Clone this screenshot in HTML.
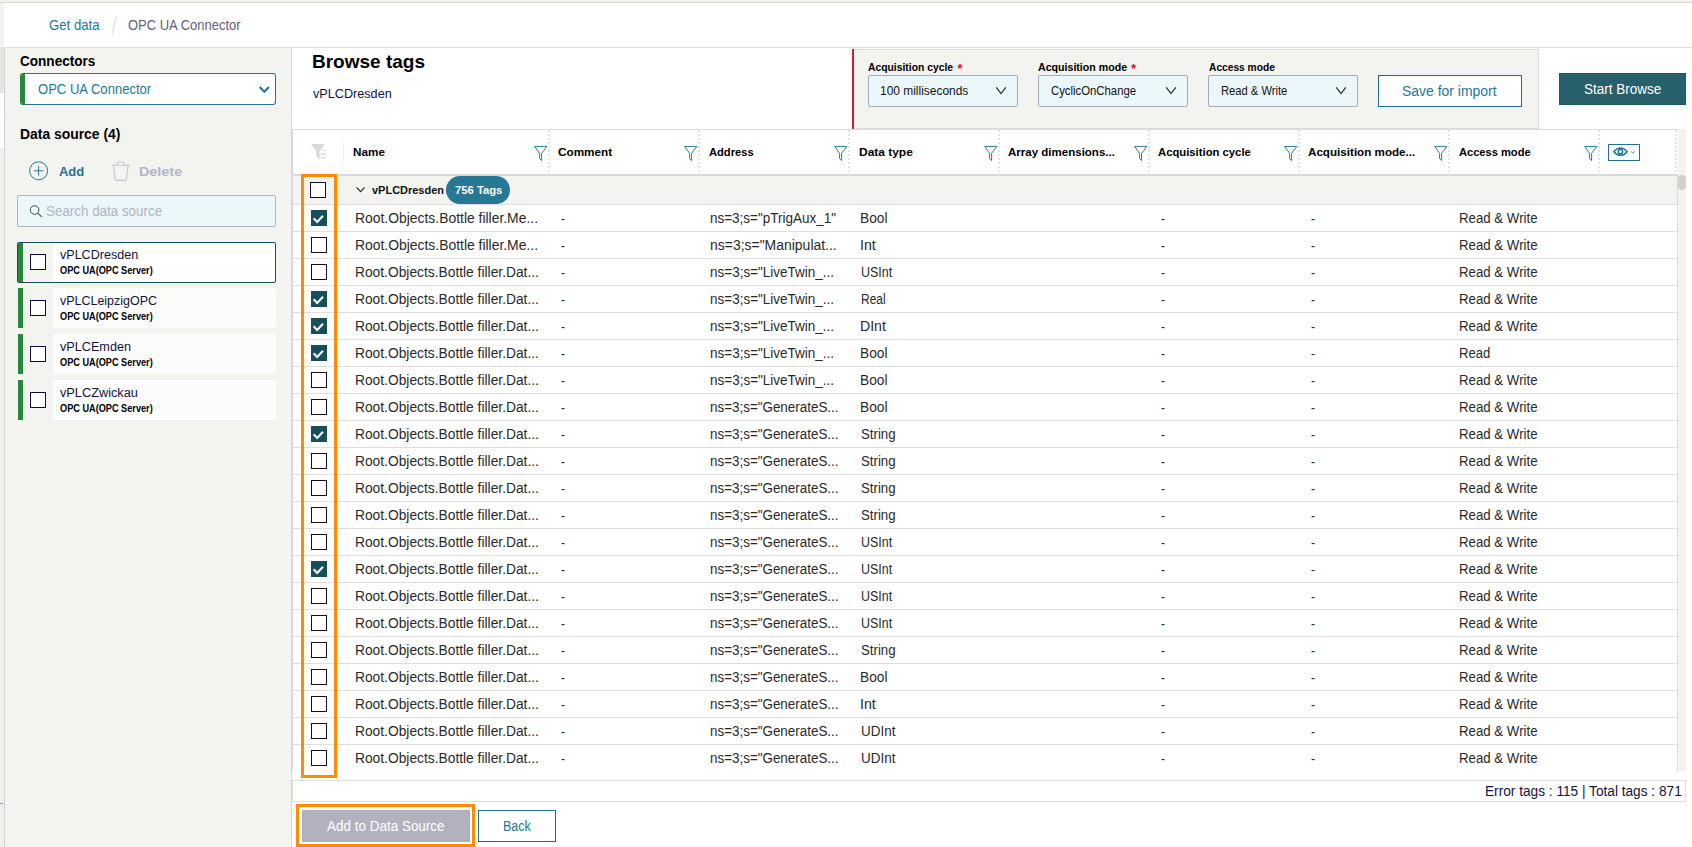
<!DOCTYPE html>
<html><head><meta charset="utf-8"><title>OPC UA Connector</title>
<style>
html,body{margin:0;padding:0;}
body{width:1692px;height:847px;overflow:hidden;background:#fff;position:relative;font-family:"Liberation Sans",sans-serif;}
.a{position:absolute;box-sizing:border-box;}
.t{position:absolute;white-space:nowrap;line-height:1;transform-origin:0 50%;font-family:"Liberation Sans",sans-serif;}
svg{position:absolute;overflow:visible;}
.cb{position:absolute;box-sizing:border-box;width:16px;height:16px;border:1.4px solid #100b3d;background:#fff;}
.cbc{position:absolute;box-sizing:border-box;width:16px;height:16px;background:#17505d;}
.rl{position:absolute;left:293px;width:1384px;height:1px;background:#dddde2;}
.dv{position:absolute;top:129px;height:45px;width:2px;background:repeating-linear-gradient(to bottom,transparent 0,transparent 1px,#e3e3e3 1px,#e3e3e3 3px,transparent 3px,transparent 4px);}
.sel{position:absolute;box-sizing:border-box;height:32px;width:150px;top:75px;background:#ebf7f8;border:1px solid #a5adc0;border-radius:2px;}
</style></head><body>

<div class="a" style="left:0;top:0;width:1692px;height:2px;background:#f3f3ef"></div>
<div class="a" style="left:0;top:2px;width:1692px;height:1px;background:#d6d6d6"></div>
<div class="a" style="left:0;top:3px;width:4px;height:44px;background:#f3f3f3"></div>
<div class="a" style="left:0;top:47px;width:4px;height:46px;background:#e6e6e4"></div>
<div class="a" style="left:0;top:93px;width:4px;height:55px;background:#fff"></div>
<div class="a" style="left:0;top:148px;width:4px;height:699px;background:linear-gradient(to right,#f2f2ee,#eeeeec 40%)"></div>
<div class="a" style="left:0;top:803px;width:3px;height:1px;background:#9a9ab0"></div>
<div class="a" style="left:4px;top:47px;width:1688px;height:1px;background:#dcdce4"></div>
<span id="bc1" class="t" style="left:48.90px;top:18.00px;font-size:14px;color:#23789a;font-weight:400;transform:scaleX(0.9409);">Get data</span>
<svg style="left:110px;top:15px" width="8" height="22"><line x1="6.3" y1="1.5" x2="2" y2="20" stroke="#e6dde8" stroke-width="1.4"/></svg>
<span id="bc2" class="t" style="left:128.20px;top:18.00px;font-size:14px;color:#5e5e7c;font-weight:400;transform:scaleX(0.9273);">OPC UA Connector</span>
<div class="a" style="left:4px;top:48px;width:288px;height:799px;background:#f3f3ef;border-left:1px solid #d2d2d2;border-right:1px solid #d6d6d6"></div>
<div class="a" style="left:5px;top:113px;width:286px;height:1px;background:#eeeeea"></div>
<span id="sb_conn" class="t" style="left:20.20px;top:54.00px;font-size:14px;color:#000;font-weight:700;transform:scaleX(0.9689);">Connectors</span>
<div class="a" style="left:20px;top:73px;width:256px;height:32px;background:#fff;border:1px solid #27728f;border-left-color:#27873a;border-radius:3px;overflow:hidden"><div class="a" style="left:-1px;top:-1px;width:5px;height:32px;background:#27873a"></div></div>
<span id="sb_sel" class="t" style="left:37.80px;top:82.00px;font-size:14px;color:#23789a;font-weight:400;transform:scaleX(0.9323);">OPC UA Connector</span>
<svg style="left:256px;top:82px" width="16" height="14"><polyline points="3.6,5 8.3,9.8 13,5" fill="none" stroke="#23789a" stroke-width="2.2"/></svg>
<span id="sb_ds" class="t" style="left:20.20px;top:127.00px;font-size:14px;color:#000;font-weight:700;transform:scaleX(0.9922);">Data source (4)</span>
<svg style="left:28px;top:160px" width="22" height="22"><circle cx="10.6" cy="10.8" r="9" fill="none" stroke="#23789a" stroke-width="1"/><path d="M5.8 10.8H15.6M10.6 6.1V15.6" stroke="#23789a" stroke-width="1" fill="none"/></svg>
<span id="sb_add" class="t" style="left:58.60px;top:165.00px;font-size:13.5px;color:#1f7494;font-weight:700;transform:scaleX(0.9615);">Add</span>
<svg style="left:110px;top:160px" width="22" height="22"><path d="M2 5.3H19.6M7.3 5.1V3.2Q7.3 2 8.6 2H13Q14.3 2 14.3 3.2V5.1M3.6 5.5L5.1 19.2Q5.3 20.4 6.5 20.4H15Q16.2 20.4 16.4 19.2L18 5.5" fill="none" stroke="#c9c3cf" stroke-width="1.1"/></svg>
<span id="sb_del" class="t" style="left:139.40px;top:165.00px;font-size:13.5px;color:#b5b5c9;font-weight:700;transform:scaleX(1.0641);">Delete</span>
<div class="a" style="left:17px;top:195px;width:259px;height:32px;background:#ebf7f8;border:1px solid #b3b3c4;border-radius:2px"></div>
<svg style="left:28px;top:204px" width="16" height="16"><circle cx="6.6" cy="6" r="4.3" fill="none" stroke="#4a4350" stroke-width="1"/><path d="M9.6 9.2L13.8 12.8" stroke="#4a4350" stroke-width="1.1"/></svg>
<span id="sb_search" class="t" style="left:46.20px;top:204.00px;font-size:14px;color:#b4b4c4;font-weight:400;transform:scaleX(0.9563);">Search data source</span>
<div class="a" style="left:17px;top:242px;width:259px;height:41px;background:#fff;border:1px solid #174e5e;border-radius:2px"></div>
<div class="a" style="left:18px;top:243px;width:5px;height:39px;background:#27873a"></div>
<div class="a" style="left:23px;top:243px;width:30px;height:39px;background:#f3f3ef"></div>
<div class="cb" style="left:30px;top:254px"></div>
<span id="it0a" class="t" style="left:60.00px;top:249.00px;font-size:12.5px;color:#12123c;font-weight:400;transform:scaleX(1.0038);">vPLCDresden</span>
<span id="it0b" class="t" style="left:60.00px;top:266.00px;font-size:10px;color:#000;font-weight:700;transform:scaleX(0.9167);">OPC UA(OPC Server)</span>
<div class="a" style="left:18px;top:288px;width:258px;height:40px;background:#fcfcfc;border-radius:2px"></div>
<div class="a" style="left:18px;top:288px;width:5px;height:40px;background:#27873a"></div>
<div class="a" style="left:23px;top:288px;width:30px;height:40px;background:#f3f3ef"></div>
<div class="cb" style="left:30px;top:300px"></div>
<span id="it1a" class="t" style="left:60.00px;top:295.00px;font-size:12.5px;color:#12123c;font-weight:400;transform:scaleX(0.9969);">vPLCLeipzigOPC</span>
<span id="it1b" class="t" style="left:60.00px;top:312.00px;font-size:10px;color:#000;font-weight:700;transform:scaleX(0.9167);">OPC UA(OPC Server)</span>
<div class="a" style="left:18px;top:334px;width:258px;height:40px;background:#fcfcfc;border-radius:2px"></div>
<div class="a" style="left:18px;top:334px;width:5px;height:40px;background:#27873a"></div>
<div class="a" style="left:23px;top:334px;width:30px;height:40px;background:#f3f3ef"></div>
<div class="cb" style="left:30px;top:346px"></div>
<span id="it2a" class="t" style="left:60.00px;top:341.00px;font-size:12.5px;color:#12123c;font-weight:400;transform:scaleX(1.0114);">vPLCEmden</span>
<span id="it2b" class="t" style="left:60.00px;top:358.00px;font-size:10px;color:#000;font-weight:700;transform:scaleX(0.9167);">OPC UA(OPC Server)</span>
<div class="a" style="left:18px;top:380px;width:258px;height:40px;background:#fcfcfc;border-radius:2px"></div>
<div class="a" style="left:18px;top:380px;width:5px;height:40px;background:#27873a"></div>
<div class="a" style="left:23px;top:380px;width:30px;height:40px;background:#f3f3ef"></div>
<div class="cb" style="left:30px;top:392px"></div>
<span id="it3a" class="t" style="left:60.00px;top:387.00px;font-size:12.5px;color:#12123c;font-weight:400;transform:scaleX(1.0195);">vPLCZwickau</span>
<span id="it3b" class="t" style="left:60.00px;top:404.00px;font-size:10px;color:#000;font-weight:700;transform:scaleX(0.9167);">OPC UA(OPC Server)</span>
<span id="h_title" class="t" style="left:311.50px;top:53.00px;font-size:18.5px;color:#000;font-weight:700;transform:scaleX(1.0275);">Browse tags</span>
<span id="h_sub" class="t" style="left:312.50px;top:88.00px;font-size:12px;color:#12123c;font-weight:400;transform:scaleX(1.0535);">vPLCDresden</span>
<div class="a" style="left:852px;top:49px;width:687px;height:80px;background:#f3f3ef;border:1px solid #dcdcdc;border-left:none"></div>
<div class="a" style="left:852px;top:49px;width:2px;height:80px;background:#d8193a"></div>
<span id="l_ac" class="t" style="left:867.90px;top:62.00px;font-size:11.5px;color:#000;font-weight:700;transform:scaleX(0.8989);">Acquisition cycle</span>
<span id="l_ac_s" class="t" style="left:957.60px;top:62.00px;font-size:13px;color:#e0102e;font-weight:700;transform:scaleX(1.0000);">*</span>
<span id="l_am" class="t" style="left:1037.90px;top:62.00px;font-size:11.5px;color:#000;font-weight:700;transform:scaleX(0.9228);">Acquisition mode</span>
<span id="l_am_s" class="t" style="left:1131.00px;top:62.00px;font-size:13px;color:#e0102e;font-weight:700;transform:scaleX(1.0000);">*</span>
<span id="l_xm" class="t" style="left:1208.60px;top:62.00px;font-size:11.5px;color:#000;font-weight:700;transform:scaleX(0.8881);">Access mode</span>
<div class="sel" style="left:868px"></div>
<svg style="left:994px;top:84px" width="16" height="14"><polyline points="2.3,3.3 7,9.5 11.8,3.3" fill="none" stroke="#222" stroke-width="1.1"/></svg>
<div class="sel" style="left:1038px"></div>
<svg style="left:1164px;top:84px" width="16" height="14"><polyline points="2.3,3.3 7,9.5 11.8,3.3" fill="none" stroke="#222" stroke-width="1.1"/></svg>
<div class="sel" style="left:1208px"></div>
<svg style="left:1334px;top:84px" width="16" height="14"><polyline points="2.3,3.3 7,9.5 11.8,3.3" fill="none" stroke="#222" stroke-width="1.1"/></svg>
<span id="s_ac" class="t" style="left:880.20px;top:85.00px;font-size:12px;color:#111;font-weight:400;transform:scaleX(0.9955);">100 milliseconds</span>
<span id="s_am" class="t" style="left:1050.60px;top:85.00px;font-size:12px;color:#111;font-weight:400;transform:scaleX(0.9445);">CyclicOnChange</span>
<span id="s_xm" class="t" style="left:1220.60px;top:85.00px;font-size:12px;color:#111;font-weight:400;transform:scaleX(0.9318);">Read &amp; Write</span>
<div class="a" style="left:1378px;top:75px;width:144px;height:32px;background:#fff;border:1px solid #1f6d88"></div>
<span id="b_save" class="t" style="left:1401.90px;top:84.00px;font-size:14px;color:#23789a;font-weight:400;transform:scaleX(0.9959);">Save for import</span>
<div class="a" style="left:1559px;top:73px;width:127px;height:32px;background:#27606a;border:1px solid #1f5963"></div>
<span id="b_start" class="t" style="left:1584.00px;top:82.00px;font-size:14px;color:#fff;font-weight:400;transform:scaleX(0.9625);">Start Browse</span>
<div class="a" style="left:292px;top:129px;width:1386px;height:642px;border-left:1px solid #d8d8e0;border-top:1px solid #dcdce2"></div>
<div class="a" style="left:1677px;top:174px;width:1px;height:597px;background:#d8d8e0"></div>
<div class="a" style="left:293px;top:174px;width:1384px;height:2px;background:#d9d9dd"></div>
<div class="a" style="left:293px;top:176px;width:1384px;height:28px;background:#f3f3ef"></div>
<svg style="left:310px;top:142px" width="18" height="19"><path d="M1.2 1.9H14.8L9.6 9.6V17.8L6.3 14.6V9.6Z" fill="#d9d9df"/><path d="M12.6 8.3H15.8M10.7 12H15.8M10.7 15.7H15.8" stroke="#d9d9df" stroke-width="1.3"/></svg>
<div class="a" style="left:343px;top:142px;width:1px;height:19px;background:#eeeeee"></div>
<span id="th0" class="t" style="left:353.00px;top:147.00px;font-size:11.5px;color:#000;font-weight:700;transform:scaleX(1.0189);">Name</span>
<svg style="left:533.8px;top:145px" width="15" height="17"><path d="M0.6 1.4H12.9L7.6 8.3V15.6L5.6 13.7V8.3Z" fill="none" stroke="#2a7c9c" stroke-width="1"/></svg>
<div class="dv" style="left:548px"></div>
<span id="th1" class="t" style="left:558.20px;top:147.00px;font-size:11.5px;color:#000;font-weight:700;transform:scaleX(1.0223);">Comment</span>
<svg style="left:683.8px;top:145px" width="15" height="17"><path d="M0.6 1.4H12.9L7.6 8.3V15.6L5.6 13.7V8.3Z" fill="none" stroke="#2a7c9c" stroke-width="1"/></svg>
<div class="dv" style="left:698px"></div>
<span id="th2" class="t" style="left:708.60px;top:147.00px;font-size:11.5px;color:#000;font-weight:700;transform:scaleX(0.9696);">Address</span>
<svg style="left:833.8px;top:145px" width="15" height="17"><path d="M0.6 1.4H12.9L7.6 8.3V15.6L5.6 13.7V8.3Z" fill="none" stroke="#2a7c9c" stroke-width="1"/></svg>
<div class="dv" style="left:848px"></div>
<span id="th3" class="t" style="left:858.50px;top:147.00px;font-size:11.5px;color:#000;font-weight:700;transform:scaleX(1.0393);">Data type</span>
<svg style="left:983.8px;top:145px" width="15" height="17"><path d="M0.6 1.4H12.9L7.6 8.3V15.6L5.6 13.7V8.3Z" fill="none" stroke="#2a7c9c" stroke-width="1"/></svg>
<div class="dv" style="left:998px"></div>
<span id="th4" class="t" style="left:1008.20px;top:147.00px;font-size:11.5px;color:#000;font-weight:700;transform:scaleX(1.0018);">Array dimensions...</span>
<svg style="left:1133.8px;top:145px" width="15" height="17"><path d="M0.6 1.4H12.9L7.6 8.3V15.6L5.6 13.7V8.3Z" fill="none" stroke="#2a7c9c" stroke-width="1"/></svg>
<div class="dv" style="left:1148px"></div>
<span id="th5" class="t" style="left:1158.20px;top:147.00px;font-size:11.5px;color:#000;font-weight:700;transform:scaleX(0.9811);">Acquisition cycle</span>
<svg style="left:1283.8px;top:145px" width="15" height="17"><path d="M0.6 1.4H12.9L7.6 8.3V15.6L5.6 13.7V8.3Z" fill="none" stroke="#2a7c9c" stroke-width="1"/></svg>
<div class="dv" style="left:1298px"></div>
<span id="th6" class="t" style="left:1308.20px;top:147.00px;font-size:11.5px;color:#000;font-weight:700;transform:scaleX(1.0113);">Acquisition mode...</span>
<svg style="left:1433.8px;top:145px" width="15" height="17"><path d="M0.6 1.4H12.9L7.6 8.3V15.6L5.6 13.7V8.3Z" fill="none" stroke="#2a7c9c" stroke-width="1"/></svg>
<div class="dv" style="left:1448px"></div>
<span id="th7" class="t" style="left:1458.60px;top:147.00px;font-size:11.5px;color:#000;font-weight:700;transform:scaleX(0.9656);">Access mode</span>
<svg style="left:1583.8px;top:145px" width="15" height="17"><path d="M0.6 1.4H12.9L7.6 8.3V15.6L5.6 13.7V8.3Z" fill="none" stroke="#2a7c9c" stroke-width="1"/></svg>
<div class="dv" style="left:1598px"></div>
<div class="dv" style="left:1675px"></div>
<div class="a" style="left:1608px;top:144px;width:32px;height:17px;border:1px solid #1f7494;background:#fff"></div>
<svg style="left:1612px;top:146px" width="26" height="12"><path d="M1.8 5.65Q8.5 -1.6 15.2 5.65Q8.5 12.9 1.8 5.65Z" fill="none" stroke="#1f7494" stroke-width="1.5"/><circle cx="8.4" cy="5.65" r="2.2" fill="none" stroke="#1f7494" stroke-width="1.5"/><polyline points="18.9,5.3 20.9,7.2 22.9,5.3" fill="none" stroke="#3d88aa" stroke-width="0.9"/></svg>
<div class="a" style="left:1678px;top:129px;width:8px;height:642px;background:#f3f3ef"></div>
<div class="a" style="left:1678px;top:175px;width:8px;height:15px;background:#d3d3cd;border-radius:4px"></div>
<div class="cb" style="left:310px;top:182px"></div>
<svg style="left:355px;top:185px" width="12" height="10"><polyline points="1.6,2.3 5.6,6.6 9.6,2.3" fill="none" stroke="#222" stroke-width="1.1"/></svg>
<span id="g_name" class="t" style="left:372.10px;top:185.00px;font-size:11.5px;color:#111;font-weight:700;transform:scaleX(0.9543);">vPLCDresden</span>
<div class="a" style="left:446px;top:176px;width:64px;height:28px;background:#267895;border-radius:14px"></div>
<span id="g_badge" class="t" style="left:454.90px;top:185.00px;font-size:11px;color:#fff;font-weight:700;transform:scaleX(1.0241);">756 Tags</span>
<div class="rl" style="top:204px"></div>
<div class="rl" style="top:231px"></div>
<div class="cbc" style="left:311px;top:210px"><svg style="left:0;top:0" width="16" height="16"><polyline points="2.6,8.3 6.2,12 12,5.8" fill="none" stroke="#fff" stroke-width="2"/></svg></div>
<span id="r0n" class="t" style="left:354.60px;top:211.00px;font-size:14px;color:#292929;font-weight:400;transform:scaleX(0.9924);">Root.Objects.Bottle filler.Me...</span>
<span id="r0c" class="t" style="left:561.00px;top:212.00px;font-size:14px;color:#292929;font-weight:400;transform:scaleX(0.8500);">-</span>
<span id="r0a" class="t" style="left:710.40px;top:211.00px;font-size:14px;color:#292929;font-weight:400;transform:scaleX(0.9634);">ns=3;s="pTrigAux_1"</span>
<span id="r0d" class="t" style="left:860.00px;top:211.00px;font-size:14px;color:#292929;font-weight:400;transform:scaleX(0.9786);">Bool</span>
<span id="r0q" class="t" style="left:1161.00px;top:212.00px;font-size:14px;color:#292929;font-weight:400;transform:scaleX(0.8500);">-</span>
<span id="r0m" class="t" style="left:1311.00px;top:212.00px;font-size:14px;color:#292929;font-weight:400;transform:scaleX(0.8500);">-</span>
<span id="r0x" class="t" style="left:1459.30px;top:211.00px;font-size:14px;color:#292929;font-weight:400;transform:scaleX(0.9464);">Read &amp; Write</span>
<div class="rl" style="top:258px"></div>
<div class="cb" style="left:311px;top:237px"></div>
<span id="r1n" class="t" style="left:354.60px;top:238.00px;font-size:14px;color:#292929;font-weight:400;transform:scaleX(0.9924);">Root.Objects.Bottle filler.Me...</span>
<span id="r1c" class="t" style="left:561.00px;top:239.00px;font-size:14px;color:#292929;font-weight:400;transform:scaleX(0.8500);">-</span>
<span id="r1a" class="t" style="left:710.40px;top:238.00px;font-size:14px;color:#292929;font-weight:400;transform:scaleX(0.9968);">ns=3;s="Manipulat...</span>
<span id="r1d" class="t" style="left:860.00px;top:238.00px;font-size:14px;color:#292929;font-weight:400;transform:scaleX(1.0140);">Int</span>
<span id="r1q" class="t" style="left:1161.00px;top:239.00px;font-size:14px;color:#292929;font-weight:400;transform:scaleX(0.8500);">-</span>
<span id="r1m" class="t" style="left:1311.00px;top:239.00px;font-size:14px;color:#292929;font-weight:400;transform:scaleX(0.8500);">-</span>
<span id="r1x" class="t" style="left:1459.30px;top:238.00px;font-size:14px;color:#292929;font-weight:400;transform:scaleX(0.9464);">Read &amp; Write</span>
<div class="rl" style="top:285px"></div>
<div class="cb" style="left:311px;top:264px"></div>
<span id="r2n" class="t" style="left:354.60px;top:265.00px;font-size:14px;color:#292929;font-weight:400;transform:scaleX(0.9848);">Root.Objects.Bottle filler.Dat...</span>
<span id="r2c" class="t" style="left:561.00px;top:266.00px;font-size:14px;color:#292929;font-weight:400;transform:scaleX(0.8500);">-</span>
<span id="r2a" class="t" style="left:710.40px;top:265.00px;font-size:14px;color:#292929;font-weight:400;transform:scaleX(0.9641);">ns=3;s="LiveTwin_...</span>
<span id="r2d" class="t" style="left:861.00px;top:265.00px;font-size:14px;color:#292929;font-weight:400;transform:scaleX(0.8913);">USInt</span>
<span id="r2q" class="t" style="left:1161.00px;top:266.00px;font-size:14px;color:#292929;font-weight:400;transform:scaleX(0.8500);">-</span>
<span id="r2m" class="t" style="left:1311.00px;top:266.00px;font-size:14px;color:#292929;font-weight:400;transform:scaleX(0.8500);">-</span>
<span id="r2x" class="t" style="left:1459.30px;top:265.00px;font-size:14px;color:#292929;font-weight:400;transform:scaleX(0.9464);">Read &amp; Write</span>
<div class="rl" style="top:312px"></div>
<div class="cbc" style="left:311px;top:291px"><svg style="left:0;top:0" width="16" height="16"><polyline points="2.6,8.3 6.2,12 12,5.8" fill="none" stroke="#fff" stroke-width="2"/></svg></div>
<span id="r3n" class="t" style="left:354.60px;top:292.00px;font-size:14px;color:#292929;font-weight:400;transform:scaleX(0.9848);">Root.Objects.Bottle filler.Dat...</span>
<span id="r3c" class="t" style="left:561.00px;top:293.00px;font-size:14px;color:#292929;font-weight:400;transform:scaleX(0.8500);">-</span>
<span id="r3a" class="t" style="left:710.40px;top:292.00px;font-size:14px;color:#292929;font-weight:400;transform:scaleX(0.9641);">ns=3;s="LiveTwin_...</span>
<span id="r3d" class="t" style="left:861.00px;top:292.00px;font-size:14px;color:#292929;font-weight:400;transform:scaleX(0.8550);">Real</span>
<span id="r3q" class="t" style="left:1161.00px;top:293.00px;font-size:14px;color:#292929;font-weight:400;transform:scaleX(0.8500);">-</span>
<span id="r3m" class="t" style="left:1311.00px;top:293.00px;font-size:14px;color:#292929;font-weight:400;transform:scaleX(0.8500);">-</span>
<span id="r3x" class="t" style="left:1459.30px;top:292.00px;font-size:14px;color:#292929;font-weight:400;transform:scaleX(0.9464);">Read &amp; Write</span>
<div class="rl" style="top:339px"></div>
<div class="cbc" style="left:311px;top:318px"><svg style="left:0;top:0" width="16" height="16"><polyline points="2.6,8.3 6.2,12 12,5.8" fill="none" stroke="#fff" stroke-width="2"/></svg></div>
<span id="r4n" class="t" style="left:354.60px;top:319.00px;font-size:14px;color:#292929;font-weight:400;transform:scaleX(0.9848);">Root.Objects.Bottle filler.Dat...</span>
<span id="r4c" class="t" style="left:561.00px;top:320.00px;font-size:14px;color:#292929;font-weight:400;transform:scaleX(0.8500);">-</span>
<span id="r4a" class="t" style="left:710.40px;top:319.00px;font-size:14px;color:#292929;font-weight:400;transform:scaleX(0.9641);">ns=3;s="LiveTwin_...</span>
<span id="r4d" class="t" style="left:860.00px;top:319.00px;font-size:14px;color:#292929;font-weight:400;transform:scaleX(1.0080);">DInt</span>
<span id="r4q" class="t" style="left:1161.00px;top:320.00px;font-size:14px;color:#292929;font-weight:400;transform:scaleX(0.8500);">-</span>
<span id="r4m" class="t" style="left:1311.00px;top:320.00px;font-size:14px;color:#292929;font-weight:400;transform:scaleX(0.8500);">-</span>
<span id="r4x" class="t" style="left:1459.30px;top:319.00px;font-size:14px;color:#292929;font-weight:400;transform:scaleX(0.9464);">Read &amp; Write</span>
<div class="rl" style="top:366px"></div>
<div class="cbc" style="left:311px;top:345px"><svg style="left:0;top:0" width="16" height="16"><polyline points="2.6,8.3 6.2,12 12,5.8" fill="none" stroke="#fff" stroke-width="2"/></svg></div>
<span id="r5n" class="t" style="left:354.60px;top:346.00px;font-size:14px;color:#292929;font-weight:400;transform:scaleX(0.9848);">Root.Objects.Bottle filler.Dat...</span>
<span id="r5c" class="t" style="left:561.00px;top:347.00px;font-size:14px;color:#292929;font-weight:400;transform:scaleX(0.8500);">-</span>
<span id="r5a" class="t" style="left:710.40px;top:346.00px;font-size:14px;color:#292929;font-weight:400;transform:scaleX(0.9641);">ns=3;s="LiveTwin_...</span>
<span id="r5d" class="t" style="left:860.00px;top:346.00px;font-size:14px;color:#292929;font-weight:400;transform:scaleX(0.9786);">Bool</span>
<span id="r5q" class="t" style="left:1161.00px;top:347.00px;font-size:14px;color:#292929;font-weight:400;transform:scaleX(0.8500);">-</span>
<span id="r5m" class="t" style="left:1311.00px;top:347.00px;font-size:14px;color:#292929;font-weight:400;transform:scaleX(0.8500);">-</span>
<span id="r5x" class="t" style="left:1459.30px;top:346.00px;font-size:14px;color:#292929;font-weight:400;transform:scaleX(0.9315);">Read</span>
<div class="rl" style="top:393px"></div>
<div class="cb" style="left:311px;top:372px"></div>
<span id="r6n" class="t" style="left:354.60px;top:373.00px;font-size:14px;color:#292929;font-weight:400;transform:scaleX(0.9848);">Root.Objects.Bottle filler.Dat...</span>
<span id="r6c" class="t" style="left:561.00px;top:374.00px;font-size:14px;color:#292929;font-weight:400;transform:scaleX(0.8500);">-</span>
<span id="r6a" class="t" style="left:710.40px;top:373.00px;font-size:14px;color:#292929;font-weight:400;transform:scaleX(0.9641);">ns=3;s="LiveTwin_...</span>
<span id="r6d" class="t" style="left:860.00px;top:373.00px;font-size:14px;color:#292929;font-weight:400;transform:scaleX(0.9786);">Bool</span>
<span id="r6q" class="t" style="left:1161.00px;top:374.00px;font-size:14px;color:#292929;font-weight:400;transform:scaleX(0.8500);">-</span>
<span id="r6m" class="t" style="left:1311.00px;top:374.00px;font-size:14px;color:#292929;font-weight:400;transform:scaleX(0.8500);">-</span>
<span id="r6x" class="t" style="left:1459.30px;top:373.00px;font-size:14px;color:#292929;font-weight:400;transform:scaleX(0.9464);">Read &amp; Write</span>
<div class="rl" style="top:420px"></div>
<div class="cb" style="left:311px;top:399px"></div>
<span id="r7n" class="t" style="left:354.60px;top:400.00px;font-size:14px;color:#292929;font-weight:400;transform:scaleX(0.9848);">Root.Objects.Bottle filler.Dat...</span>
<span id="r7c" class="t" style="left:561.00px;top:401.00px;font-size:14px;color:#292929;font-weight:400;transform:scaleX(0.8500);">-</span>
<span id="r7a" class="t" style="left:710.40px;top:400.00px;font-size:14px;color:#292929;font-weight:400;transform:scaleX(0.9579);">ns=3;s="GenerateS...</span>
<span id="r7d" class="t" style="left:860.00px;top:400.00px;font-size:14px;color:#292929;font-weight:400;transform:scaleX(0.9786);">Bool</span>
<span id="r7q" class="t" style="left:1161.00px;top:401.00px;font-size:14px;color:#292929;font-weight:400;transform:scaleX(0.8500);">-</span>
<span id="r7m" class="t" style="left:1311.00px;top:401.00px;font-size:14px;color:#292929;font-weight:400;transform:scaleX(0.8500);">-</span>
<span id="r7x" class="t" style="left:1459.30px;top:400.00px;font-size:14px;color:#292929;font-weight:400;transform:scaleX(0.9464);">Read &amp; Write</span>
<div class="rl" style="top:447px"></div>
<div class="cbc" style="left:311px;top:426px"><svg style="left:0;top:0" width="16" height="16"><polyline points="2.6,8.3 6.2,12 12,5.8" fill="none" stroke="#fff" stroke-width="2"/></svg></div>
<span id="r8n" class="t" style="left:354.60px;top:427.00px;font-size:14px;color:#292929;font-weight:400;transform:scaleX(0.9848);">Root.Objects.Bottle filler.Dat...</span>
<span id="r8c" class="t" style="left:561.00px;top:428.00px;font-size:14px;color:#292929;font-weight:400;transform:scaleX(0.8500);">-</span>
<span id="r8a" class="t" style="left:710.40px;top:427.00px;font-size:14px;color:#292929;font-weight:400;transform:scaleX(0.9579);">ns=3;s="GenerateS...</span>
<span id="r8d" class="t" style="left:861.00px;top:427.00px;font-size:14px;color:#292929;font-weight:400;transform:scaleX(0.9446);">String</span>
<span id="r8q" class="t" style="left:1161.00px;top:428.00px;font-size:14px;color:#292929;font-weight:400;transform:scaleX(0.8500);">-</span>
<span id="r8m" class="t" style="left:1311.00px;top:428.00px;font-size:14px;color:#292929;font-weight:400;transform:scaleX(0.8500);">-</span>
<span id="r8x" class="t" style="left:1459.30px;top:427.00px;font-size:14px;color:#292929;font-weight:400;transform:scaleX(0.9464);">Read &amp; Write</span>
<div class="rl" style="top:474px"></div>
<div class="cb" style="left:311px;top:453px"></div>
<span id="r9n" class="t" style="left:354.60px;top:454.00px;font-size:14px;color:#292929;font-weight:400;transform:scaleX(0.9848);">Root.Objects.Bottle filler.Dat...</span>
<span id="r9c" class="t" style="left:561.00px;top:455.00px;font-size:14px;color:#292929;font-weight:400;transform:scaleX(0.8500);">-</span>
<span id="r9a" class="t" style="left:710.40px;top:454.00px;font-size:14px;color:#292929;font-weight:400;transform:scaleX(0.9579);">ns=3;s="GenerateS...</span>
<span id="r9d" class="t" style="left:861.00px;top:454.00px;font-size:14px;color:#292929;font-weight:400;transform:scaleX(0.9446);">String</span>
<span id="r9q" class="t" style="left:1161.00px;top:455.00px;font-size:14px;color:#292929;font-weight:400;transform:scaleX(0.8500);">-</span>
<span id="r9m" class="t" style="left:1311.00px;top:455.00px;font-size:14px;color:#292929;font-weight:400;transform:scaleX(0.8500);">-</span>
<span id="r9x" class="t" style="left:1459.30px;top:454.00px;font-size:14px;color:#292929;font-weight:400;transform:scaleX(0.9464);">Read &amp; Write</span>
<div class="rl" style="top:501px"></div>
<div class="cb" style="left:311px;top:480px"></div>
<span id="r10n" class="t" style="left:354.60px;top:481.00px;font-size:14px;color:#292929;font-weight:400;transform:scaleX(0.9848);">Root.Objects.Bottle filler.Dat...</span>
<span id="r10c" class="t" style="left:561.00px;top:482.00px;font-size:14px;color:#292929;font-weight:400;transform:scaleX(0.8500);">-</span>
<span id="r10a" class="t" style="left:710.40px;top:481.00px;font-size:14px;color:#292929;font-weight:400;transform:scaleX(0.9579);">ns=3;s="GenerateS...</span>
<span id="r10d" class="t" style="left:861.00px;top:481.00px;font-size:14px;color:#292929;font-weight:400;transform:scaleX(0.9446);">String</span>
<span id="r10q" class="t" style="left:1161.00px;top:482.00px;font-size:14px;color:#292929;font-weight:400;transform:scaleX(0.8500);">-</span>
<span id="r10m" class="t" style="left:1311.00px;top:482.00px;font-size:14px;color:#292929;font-weight:400;transform:scaleX(0.8500);">-</span>
<span id="r10x" class="t" style="left:1459.30px;top:481.00px;font-size:14px;color:#292929;font-weight:400;transform:scaleX(0.9464);">Read &amp; Write</span>
<div class="rl" style="top:528px"></div>
<div class="cb" style="left:311px;top:507px"></div>
<span id="r11n" class="t" style="left:354.60px;top:508.00px;font-size:14px;color:#292929;font-weight:400;transform:scaleX(0.9848);">Root.Objects.Bottle filler.Dat...</span>
<span id="r11c" class="t" style="left:561.00px;top:509.00px;font-size:14px;color:#292929;font-weight:400;transform:scaleX(0.8500);">-</span>
<span id="r11a" class="t" style="left:710.40px;top:508.00px;font-size:14px;color:#292929;font-weight:400;transform:scaleX(0.9579);">ns=3;s="GenerateS...</span>
<span id="r11d" class="t" style="left:861.00px;top:508.00px;font-size:14px;color:#292929;font-weight:400;transform:scaleX(0.9446);">String</span>
<span id="r11q" class="t" style="left:1161.00px;top:509.00px;font-size:14px;color:#292929;font-weight:400;transform:scaleX(0.8500);">-</span>
<span id="r11m" class="t" style="left:1311.00px;top:509.00px;font-size:14px;color:#292929;font-weight:400;transform:scaleX(0.8500);">-</span>
<span id="r11x" class="t" style="left:1459.30px;top:508.00px;font-size:14px;color:#292929;font-weight:400;transform:scaleX(0.9464);">Read &amp; Write</span>
<div class="rl" style="top:555px"></div>
<div class="cb" style="left:311px;top:534px"></div>
<span id="r12n" class="t" style="left:354.60px;top:535.00px;font-size:14px;color:#292929;font-weight:400;transform:scaleX(0.9848);">Root.Objects.Bottle filler.Dat...</span>
<span id="r12c" class="t" style="left:561.00px;top:536.00px;font-size:14px;color:#292929;font-weight:400;transform:scaleX(0.8500);">-</span>
<span id="r12a" class="t" style="left:710.40px;top:535.00px;font-size:14px;color:#292929;font-weight:400;transform:scaleX(0.9579);">ns=3;s="GenerateS...</span>
<span id="r12d" class="t" style="left:861.00px;top:535.00px;font-size:14px;color:#292929;font-weight:400;transform:scaleX(0.8913);">USInt</span>
<span id="r12q" class="t" style="left:1161.00px;top:536.00px;font-size:14px;color:#292929;font-weight:400;transform:scaleX(0.8500);">-</span>
<span id="r12m" class="t" style="left:1311.00px;top:536.00px;font-size:14px;color:#292929;font-weight:400;transform:scaleX(0.8500);">-</span>
<span id="r12x" class="t" style="left:1459.30px;top:535.00px;font-size:14px;color:#292929;font-weight:400;transform:scaleX(0.9464);">Read &amp; Write</span>
<div class="rl" style="top:582px"></div>
<div class="cbc" style="left:311px;top:561px"><svg style="left:0;top:0" width="16" height="16"><polyline points="2.6,8.3 6.2,12 12,5.8" fill="none" stroke="#fff" stroke-width="2"/></svg></div>
<span id="r13n" class="t" style="left:354.60px;top:562.00px;font-size:14px;color:#292929;font-weight:400;transform:scaleX(0.9848);">Root.Objects.Bottle filler.Dat...</span>
<span id="r13c" class="t" style="left:561.00px;top:563.00px;font-size:14px;color:#292929;font-weight:400;transform:scaleX(0.8500);">-</span>
<span id="r13a" class="t" style="left:710.40px;top:562.00px;font-size:14px;color:#292929;font-weight:400;transform:scaleX(0.9579);">ns=3;s="GenerateS...</span>
<span id="r13d" class="t" style="left:861.00px;top:562.00px;font-size:14px;color:#292929;font-weight:400;transform:scaleX(0.8913);">USInt</span>
<span id="r13q" class="t" style="left:1161.00px;top:563.00px;font-size:14px;color:#292929;font-weight:400;transform:scaleX(0.8500);">-</span>
<span id="r13m" class="t" style="left:1311.00px;top:563.00px;font-size:14px;color:#292929;font-weight:400;transform:scaleX(0.8500);">-</span>
<span id="r13x" class="t" style="left:1459.30px;top:562.00px;font-size:14px;color:#292929;font-weight:400;transform:scaleX(0.9464);">Read &amp; Write</span>
<div class="rl" style="top:609px"></div>
<div class="cb" style="left:311px;top:588px"></div>
<span id="r14n" class="t" style="left:354.60px;top:589.00px;font-size:14px;color:#292929;font-weight:400;transform:scaleX(0.9848);">Root.Objects.Bottle filler.Dat...</span>
<span id="r14c" class="t" style="left:561.00px;top:590.00px;font-size:14px;color:#292929;font-weight:400;transform:scaleX(0.8500);">-</span>
<span id="r14a" class="t" style="left:710.40px;top:589.00px;font-size:14px;color:#292929;font-weight:400;transform:scaleX(0.9579);">ns=3;s="GenerateS...</span>
<span id="r14d" class="t" style="left:861.00px;top:589.00px;font-size:14px;color:#292929;font-weight:400;transform:scaleX(0.8913);">USInt</span>
<span id="r14q" class="t" style="left:1161.00px;top:590.00px;font-size:14px;color:#292929;font-weight:400;transform:scaleX(0.8500);">-</span>
<span id="r14m" class="t" style="left:1311.00px;top:590.00px;font-size:14px;color:#292929;font-weight:400;transform:scaleX(0.8500);">-</span>
<span id="r14x" class="t" style="left:1459.30px;top:589.00px;font-size:14px;color:#292929;font-weight:400;transform:scaleX(0.9464);">Read &amp; Write</span>
<div class="rl" style="top:636px"></div>
<div class="cb" style="left:311px;top:615px"></div>
<span id="r15n" class="t" style="left:354.60px;top:616.00px;font-size:14px;color:#292929;font-weight:400;transform:scaleX(0.9848);">Root.Objects.Bottle filler.Dat...</span>
<span id="r15c" class="t" style="left:561.00px;top:617.00px;font-size:14px;color:#292929;font-weight:400;transform:scaleX(0.8500);">-</span>
<span id="r15a" class="t" style="left:710.40px;top:616.00px;font-size:14px;color:#292929;font-weight:400;transform:scaleX(0.9579);">ns=3;s="GenerateS...</span>
<span id="r15d" class="t" style="left:861.00px;top:616.00px;font-size:14px;color:#292929;font-weight:400;transform:scaleX(0.8913);">USInt</span>
<span id="r15q" class="t" style="left:1161.00px;top:617.00px;font-size:14px;color:#292929;font-weight:400;transform:scaleX(0.8500);">-</span>
<span id="r15m" class="t" style="left:1311.00px;top:617.00px;font-size:14px;color:#292929;font-weight:400;transform:scaleX(0.8500);">-</span>
<span id="r15x" class="t" style="left:1459.30px;top:616.00px;font-size:14px;color:#292929;font-weight:400;transform:scaleX(0.9464);">Read &amp; Write</span>
<div class="rl" style="top:663px"></div>
<div class="cb" style="left:311px;top:642px"></div>
<span id="r16n" class="t" style="left:354.60px;top:643.00px;font-size:14px;color:#292929;font-weight:400;transform:scaleX(0.9848);">Root.Objects.Bottle filler.Dat...</span>
<span id="r16c" class="t" style="left:561.00px;top:644.00px;font-size:14px;color:#292929;font-weight:400;transform:scaleX(0.8500);">-</span>
<span id="r16a" class="t" style="left:710.40px;top:643.00px;font-size:14px;color:#292929;font-weight:400;transform:scaleX(0.9579);">ns=3;s="GenerateS...</span>
<span id="r16d" class="t" style="left:861.00px;top:643.00px;font-size:14px;color:#292929;font-weight:400;transform:scaleX(0.9446);">String</span>
<span id="r16q" class="t" style="left:1161.00px;top:644.00px;font-size:14px;color:#292929;font-weight:400;transform:scaleX(0.8500);">-</span>
<span id="r16m" class="t" style="left:1311.00px;top:644.00px;font-size:14px;color:#292929;font-weight:400;transform:scaleX(0.8500);">-</span>
<span id="r16x" class="t" style="left:1459.30px;top:643.00px;font-size:14px;color:#292929;font-weight:400;transform:scaleX(0.9464);">Read &amp; Write</span>
<div class="rl" style="top:690px"></div>
<div class="cb" style="left:311px;top:669px"></div>
<span id="r17n" class="t" style="left:354.60px;top:670.00px;font-size:14px;color:#292929;font-weight:400;transform:scaleX(0.9848);">Root.Objects.Bottle filler.Dat...</span>
<span id="r17c" class="t" style="left:561.00px;top:671.00px;font-size:14px;color:#292929;font-weight:400;transform:scaleX(0.8500);">-</span>
<span id="r17a" class="t" style="left:710.40px;top:670.00px;font-size:14px;color:#292929;font-weight:400;transform:scaleX(0.9579);">ns=3;s="GenerateS...</span>
<span id="r17d" class="t" style="left:860.00px;top:670.00px;font-size:14px;color:#292929;font-weight:400;transform:scaleX(0.9786);">Bool</span>
<span id="r17q" class="t" style="left:1161.00px;top:671.00px;font-size:14px;color:#292929;font-weight:400;transform:scaleX(0.8500);">-</span>
<span id="r17m" class="t" style="left:1311.00px;top:671.00px;font-size:14px;color:#292929;font-weight:400;transform:scaleX(0.8500);">-</span>
<span id="r17x" class="t" style="left:1459.30px;top:670.00px;font-size:14px;color:#292929;font-weight:400;transform:scaleX(0.9464);">Read &amp; Write</span>
<div class="rl" style="top:717px"></div>
<div class="cb" style="left:311px;top:696px"></div>
<span id="r18n" class="t" style="left:354.60px;top:697.00px;font-size:14px;color:#292929;font-weight:400;transform:scaleX(0.9848);">Root.Objects.Bottle filler.Dat...</span>
<span id="r18c" class="t" style="left:561.00px;top:698.00px;font-size:14px;color:#292929;font-weight:400;transform:scaleX(0.8500);">-</span>
<span id="r18a" class="t" style="left:710.40px;top:697.00px;font-size:14px;color:#292929;font-weight:400;transform:scaleX(0.9579);">ns=3;s="GenerateS...</span>
<span id="r18d" class="t" style="left:860.00px;top:697.00px;font-size:14px;color:#292929;font-weight:400;transform:scaleX(1.0140);">Int</span>
<span id="r18q" class="t" style="left:1161.00px;top:698.00px;font-size:14px;color:#292929;font-weight:400;transform:scaleX(0.8500);">-</span>
<span id="r18m" class="t" style="left:1311.00px;top:698.00px;font-size:14px;color:#292929;font-weight:400;transform:scaleX(0.8500);">-</span>
<span id="r18x" class="t" style="left:1459.30px;top:697.00px;font-size:14px;color:#292929;font-weight:400;transform:scaleX(0.9464);">Read &amp; Write</span>
<div class="rl" style="top:744px"></div>
<div class="cb" style="left:311px;top:723px"></div>
<span id="r19n" class="t" style="left:354.60px;top:724.00px;font-size:14px;color:#292929;font-weight:400;transform:scaleX(0.9848);">Root.Objects.Bottle filler.Dat...</span>
<span id="r19c" class="t" style="left:561.00px;top:725.00px;font-size:14px;color:#292929;font-weight:400;transform:scaleX(0.8500);">-</span>
<span id="r19a" class="t" style="left:710.40px;top:724.00px;font-size:14px;color:#292929;font-weight:400;transform:scaleX(0.9579);">ns=3;s="GenerateS...</span>
<span id="r19d" class="t" style="left:861.00px;top:724.00px;font-size:14px;color:#292929;font-weight:400;transform:scaleX(0.9604);">UDInt</span>
<span id="r19q" class="t" style="left:1161.00px;top:725.00px;font-size:14px;color:#292929;font-weight:400;transform:scaleX(0.8500);">-</span>
<span id="r19m" class="t" style="left:1311.00px;top:725.00px;font-size:14px;color:#292929;font-weight:400;transform:scaleX(0.8500);">-</span>
<span id="r19x" class="t" style="left:1459.30px;top:724.00px;font-size:14px;color:#292929;font-weight:400;transform:scaleX(0.9464);">Read &amp; Write</span>
<div class="cb" style="left:311px;top:750px"></div>
<span id="r20n" class="t" style="left:354.60px;top:751.00px;font-size:14px;color:#292929;font-weight:400;transform:scaleX(0.9848);">Root.Objects.Bottle filler.Dat...</span>
<span id="r20c" class="t" style="left:561.00px;top:752.00px;font-size:14px;color:#292929;font-weight:400;transform:scaleX(0.8500);">-</span>
<span id="r20a" class="t" style="left:710.40px;top:751.00px;font-size:14px;color:#292929;font-weight:400;transform:scaleX(0.9579);">ns=3;s="GenerateS...</span>
<span id="r20d" class="t" style="left:861.00px;top:751.00px;font-size:14px;color:#292929;font-weight:400;transform:scaleX(0.9604);">UDInt</span>
<span id="r20q" class="t" style="left:1161.00px;top:752.00px;font-size:14px;color:#292929;font-weight:400;transform:scaleX(0.8500);">-</span>
<span id="r20m" class="t" style="left:1311.00px;top:752.00px;font-size:14px;color:#292929;font-weight:400;transform:scaleX(0.8500);">-</span>
<span id="r20x" class="t" style="left:1459.30px;top:751.00px;font-size:14px;color:#292929;font-weight:400;transform:scaleX(0.9464);">Read &amp; Write</span>
<div class="a" style="left:301px;top:174px;width:36px;height:604px;border:3px solid #ff8c00"></div>
<div class="a" style="left:292px;top:780px;width:1394px;height:22px;border:1px solid #dcdce4;background:#fff"></div>
<span id="f_txt" class="t" style="left:1484.70px;top:784.00px;font-size:14px;color:#14143c;font-weight:400;transform:scaleX(0.9761);">Error tags : 115 | Total tags : 871</span>
<div class="a" style="left:296px;top:804px;width:179px;height:43px;border:3px solid #ff8c00"></div>
<div class="a" style="left:302px;top:810px;width:168px;height:32px;background:#b2b2be;border:1px solid #acacb9"></div>
<span id="b_add" class="t" style="left:326.90px;top:819.00px;font-size:14px;color:#ffffff;font-weight:400;transform:scaleX(0.9623);">Add to Data Source</span>
<div class="a" style="left:478px;top:810px;width:78px;height:32px;background:#fff;border:1px solid #1f6d88"></div>
<span id="b_back" class="t" style="left:502.60px;top:819.00px;font-size:14px;color:#23789a;font-weight:400;transform:scaleX(0.8937);">Back</span>
</body></html>
